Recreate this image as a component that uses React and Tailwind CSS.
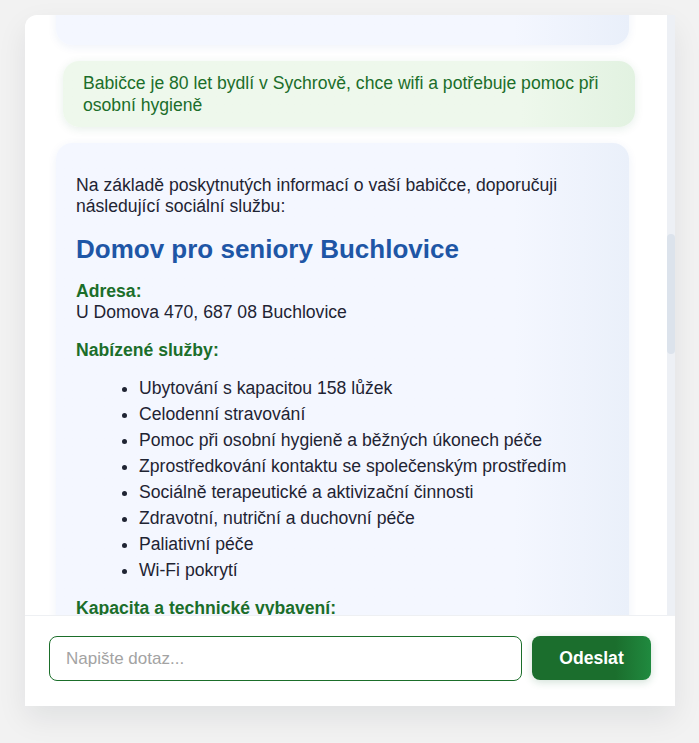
import React from 'react';

const services = [
  'Ubytování s kapacitou 158 lůžek',
  'Celodenní stravování',
  'Pomoc při osobní hygieně a běžných úkonech péče',
  'Zprostředkování kontaktu se společenským prostředím',
  'Sociálně terapeutické a aktivizační činnosti',
  'Zdravotní, nutriční a duchovní péče',
  'Paliativní péče',
  'Wi-Fi pokrytí',
];

const App = () => {
  return (
    <div className="min-h-[743px] bg-[#f2f2f2] pt-[15px] pl-[25px] font-['Liberation_Sans',Arial,Helvetica,sans-serif]">
      <div className="w-[650px] rounded-t-[12px] shadow-[0_12px_30px_rgba(15,23,42,0.08)]">
        {/* chat log */}
        <div className="flex h-[600px]">
          <div className="flex-1 overflow-hidden rounded-tl-[12px] bg-white pl-[31px] pr-[32px]">
            <div className="flex flex-col gap-4">
              <div className="-mt-[50px] h-[80px] w-[573px] rounded-[16px] bg-gradient-to-r from-[#f4f7ff] from-80% to-[#e9effa] shadow-[0_2px_10px_rgba(30,64,175,0.07)]" />

              <div className="ml-auto w-[572px] rounded-[16px] bg-gradient-to-r from-[#eef8ec] from-80% to-[#e2f2e1] px-5 py-[11px] text-[17.6px] leading-[22px] text-[#1b6e2a] shadow-[0_2px_10px_rgba(22,101,52,0.1)]">
                Babičce je 80 let bydlí v Sychrově, chce wifi a potřebuje pomoc při osobní hygieně
              </div>

              <div className="w-[573px] rounded-[16px] bg-gradient-to-r from-[#f4f7ff] from-80% to-[#eaf0fa] px-5 py-4 text-[17.6px] leading-[21px] text-[#1f2433] shadow-[0_2px_10px_rgba(30,64,175,0.07)]">
                <p className="mt-4">
                  Na základě poskytnutých informací o vaší babičce, doporučuji následující sociální službu:
                </p>
                <h2 className="mt-[17px] text-[26px] font-bold leading-[30px] text-[#1e56a6]">
                  Domov pro seniory Buchlovice
                </h2>
                <div className="mt-[17px]">
                  <div className="font-bold text-[#1b6e2a]">Adresa:</div>
                  <div>U Domova 470, 687 08 Buchlovice</div>
                </div>
                <div className="mt-[17px] font-bold text-[#1b6e2a]">Nabízené služby:</div>
                <ul className="mt-[17px] list-disc pl-[63px]">
                  {services.map((s) => (
                    <li key={s} className="mb-[5px]">
                      {s}
                    </li>
                  ))}
                </ul>
                <div className="mt-[17px] font-bold text-[#1b6e2a]">Kapacita a technické vybavení:</div>
                <div className="h-[200px]" />
              </div>
            </div>
          </div>
          {/* scrollbar */}
          <div className="w-[8px] bg-[#edf0f5] pt-[219px]">
            <div className="h-[120px] rounded-full bg-[#dce3ec]" />
          </div>
        </div>

        {/* input bar */}
        <div className="flex gap-[10px] border-t border-[#eef0f3] bg-white px-6 pt-5 pb-[25px]">
          <input
            autoFocus
            placeholder="Napište dotaz..."
            className="h-[45px] flex-1 rounded-lg border border-[#1b6e2a] px-4 text-[17px] text-[#1f2433] outline-none placeholder:text-[#a3a3a3] caret-[#1a73e8]"
          />
          <button className="h-[44px] w-[119px] rounded-lg bg-gradient-to-r from-[#1b6e2d] from-70% to-[#208a3f] text-[17.6px] font-bold text-white shadow-[0_2px_8px_rgba(22,101,52,0.2)]">
            Odeslat
          </button>
        </div>
      </div>
    </div>
  );
};

export default App;
